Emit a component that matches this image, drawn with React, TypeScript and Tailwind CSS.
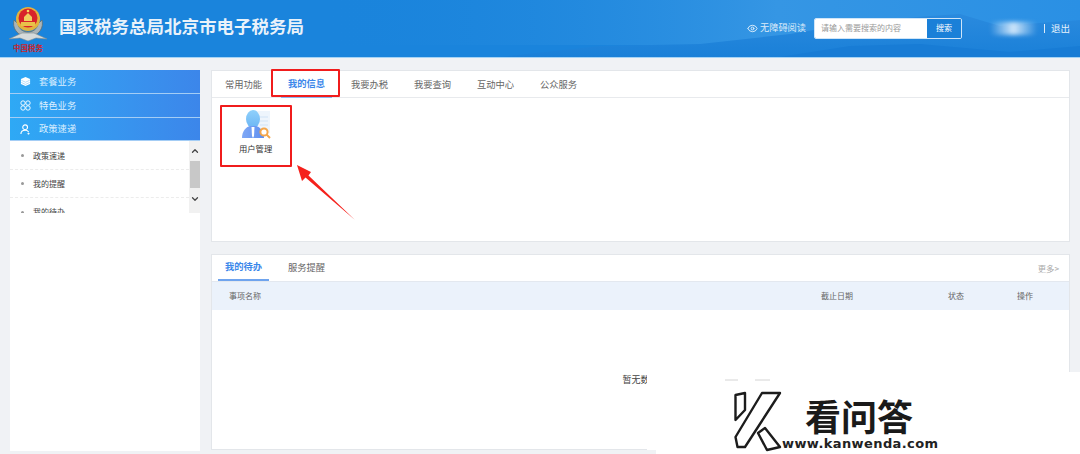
import { Eye, ChevronUp, ChevronDown } from "lucide-react";
import type { ReactNode } from "react";

const topTabs = ["常用功能", "我的信息", "我要办税", "我要查询", "互动中心", "公众服务"];

function CubeIcon() {
  return (
    <svg viewBox="0 0 12 12" className="w-[11px] h-[11px]">
      <path d="M6 1 L11 3.4 V8.6 L6 11 L1 8.6 V3.4Z" fill="#fff" />
      <path d="M1.4 4.6 L6 6.8 L10.6 4.6 M1.4 7 L6 9.2 L10.6 7" stroke="#8cc9f5" strokeWidth="0.7" fill="none" />
    </svg>
  );
}

function LoopsIcon() {
  return (
    <svg viewBox="0 0 12 12" className="w-[11px] h-[11px]" fill="none" stroke="#fff" strokeWidth="1">
      <circle cx="3.3" cy="3.3" r="2.4" />
      <circle cx="8.7" cy="3.3" r="2.4" />
      <circle cx="3.3" cy="8.7" r="2.4" />
      <circle cx="8.7" cy="8.7" r="2.4" />
    </svg>
  );
}

function PersonIcon() {
  return (
    <svg viewBox="0 0 12 12" className="w-[11px] h-[11px]" fill="none" stroke="#fff" strokeWidth="1.2">
      <circle cx="5.6" cy="3.6" r="2.6" />
      <path d="M1 11 C1 8 3 6.8 5.6 6.8 C7.4 6.8 8.6 7.4 9.4 8.6" />
      <path d="M9.2 9.4 V11.6 M8.1 10.5 H10.6" strokeWidth="0.9" />
    </svg>
  );
}

const sideItems: { label: string; icon: ReactNode; h: string }[] = [
  { label: "套餐业务", icon: <CubeIcon />, h: "h-[24px]" },
  { label: "特色业务", icon: <LoopsIcon />, h: "h-[24px]" },
  { label: "政策速递", icon: <PersonIcon />, h: "h-[23px]" },
];

function Emblem() {
  return (
    <div className="w-[38px] h-[52px] ml-[9px] flex flex-col items-center shrink-0">
      <svg viewBox="0 0 38 40" className="w-[38px] h-[40px]">
        <path d="M5 17 C3 25 8 31 14 33 L24 33 C30 31 35 25 33 17 L29 21 C28 26 24 29 19 29 C14 29 10 26 9 21Z" fill="#aab4b8" stroke="#5d6f73" strokeWidth="0.8" />
        <path d="M0 36 L13 30 L25 30 L38 36 L27 35 L19 38 L11 35Z" fill="#d5dadb" stroke="#7d8b8e" strokeWidth="0.6" />
        <circle cx="19" cy="16" r="12" fill="#e2b33d" />
        <circle cx="19" cy="15" r="9.5" fill="#d8232a" />
        <path d="M12 19 H26 V23 H12Z" fill="#e9c14a" />
        <path d="M15 14 L19 10 L23 14 V18 H15Z" fill="#f0cf5e" />
        <circle cx="19" cy="8" r="1.3" fill="#f5d85f" />
      </svg>
      <span className="text-[7.5px] leading-[9px] font-bold text-[#c9252b] font-['Noto_Sans_CJK_SC',serif] whitespace-nowrap">中国税务</span>
    </div>
  );
}

function HeaderScenery() {
  return (
    <svg viewBox="0 0 1080 57" preserveAspectRatio="none" className="absolute inset-0 w-full h-[57px]">
      <defs>
        <linearGradient id="sky" x1="0" y1="0" x2="1" y2="0">
          <stop offset="0.3" stopColor="#1a84dc" stopOpacity="0" />
          <stop offset="0.72" stopColor="#3596e4" />
          <stop offset="1" stopColor="#2a90e4" />
        </linearGradient>
        <linearGradient id="hill" x1="0" y1="0" x2="0" y2="1">
          <stop offset="0" stopColor="#2a8ade" />
          <stop offset="1" stopColor="#1a80d8" />
        </linearGradient>
      </defs>
      <rect width="1080" height="45" fill="url(#sky)" />
      <path d="M500 57 L600 46 L700 44 L790 34 L860 22 L930 16 L960 14 L1000 26 L1080 20 V57Z" fill="url(#hill)" />
      <path d="M780 57 L850 46 L920 44 L1010 52 L1080 46 V57Z" fill="#187cd5" />
    </svg>
  );
}

function UserManageIcon() {
  return (
    <svg viewBox="0 0 30 30" className="w-[30px] h-[30px]">
      <defs>
        <linearGradient id="head" x1="0" y1="0" x2="0" y2="1">
          <stop offset="0" stopColor="#8fd0fb" />
          <stop offset="1" stopColor="#6cb6f4" />
        </linearGradient>
        <linearGradient id="body" x1="0" y1="0" x2="1" y2="0">
          <stop offset="0" stopColor="#7fa8f5" />
          <stop offset="1" stopColor="#5f8ff0" />
        </linearGradient>
      </defs>
      <path d="M12 2 H29 V24 H18Z" fill="#eef5fc" />
      <path d="M19 8 H27 M19 12 H27 M19 16 H27" stroke="#cfe3f6" strokeWidth="1.2" />
      <ellipse cx="12" cy="10" rx="7" ry="9" fill="url(#head)" />
      <path d="M1 29 C1 22 5 18 9 17 L15 17 C19 18 23 22 23 29Z" fill="url(#body)" />
      <path d="M10.5 18 L13.5 18 L13 27 L12 29 L11 27Z" fill="#fff" />
      <circle cx="23" cy="23" r="3.6" fill="#fff" stroke="#f4a64a" strokeWidth="2" />
      <path d="M25.5 25.5 L29 29" stroke="#f4a64a" strokeWidth="2" />
    </svg>
  );
}

function SubRow({ label, border }: { label: string; border?: boolean }) {
  return (
    <div className={`h-[28px] flex items-center pl-[11px] gap-[9px] ${border ? "border-b border-dashed border-[#ececec]" : ""}`}>
      <span className="w-[3px] h-[3px] rounded-full bg-[#999]" />
      <span>{label}</span>
    </div>
  );
}

function Sidebar() {
  return (
    <aside className="w-[190px] ml-[10px] h-[381px] bg-white shrink-0">
      {sideItems.map(({ label, icon, h }) => (
        <div key={label} className={`${h} border-b border-[#a4cdf5] flex items-center pl-[10px] gap-[8px] bg-gradient-to-r from-[#2ea9f5] to-[#3c86ea] text-[#dcefff] text-[9.3px]`}>
          {icon}
          <span>{label}</span>
        </div>
      ))}
      <div className="h-[72px] flex overflow-hidden">
        <div className="flex-1 text-[8px] text-[#444] pt-[1px]">
          <SubRow label="政策速递" border />
          <SubRow label="我的提醒" border />
          <SubRow label="我的待办" />
        </div>
        <div className="w-[11px] bg-[#f1f1f1] flex flex-col items-center">
          <ChevronUp className="w-[10px] h-[20px] text-[#444]" strokeWidth={3} />
          <div className="w-[10px] h-[27px] bg-[#c8c8c8]" />
          <ChevronDown className="w-[10px] h-[22px] text-[#444]" strokeWidth={3} />
        </div>
      </div>
    </aside>
  );
}

export default function App() {
  return (
    <div className="relative w-[1080px] h-[454px] overflow-hidden bg-[#f0f2f5] font-['Noto_Sans_CJK_SC','Liberation_Sans',sans-serif]">
      {/* Header */}
      <header className="relative h-[58px] bg-[#1a84dc] border-b border-[#a5d3f5] flex items-center">
        <HeaderScenery />
        <div className="relative flex items-center w-full">
          <Emblem />
          <h1 className="ml-[12px] text-[17.5px] font-bold text-[#e9f2fa] whitespace-nowrap -mt-[4px]">国家税务总局北京市电子税务局</h1>
          <div className="ml-auto flex items-center -mt-[1px]">
            <Eye className="w-[11px] h-[11px] text-[#e6f2fc] mr-[2px]" />
            <span className="text-[9.2px] text-[#dcebf9]">无障碍阅读</span>
            <div className="ml-[8px] w-[148px] h-[21px] flex rounded-[2px] border border-[#cfe5f8] overflow-hidden">
              <div className="flex-1 bg-white pl-[6px] flex items-center text-[8px] text-[#999]">请输入需要搜索的内容</div>
              <div className="w-[34px] bg-[#1a80d8] flex items-center justify-center text-[8px] text-white">搜索</div>
            </div>
            <div className="ml-[28px] w-[47px] h-[13px] rounded-[3px] bg-gradient-to-r from-[#ffffff00] via-[#cfe6fa] to-[#ffffff00] blur-[2px]" />
            <span className="ml-[7px] w-px h-[9px] bg-[#dcebf9]" />
            <span className="ml-[6px] mr-[10px] text-[9.5px] text-[#e6f2fc]">退出</span>
          </div>
        </div>
      </header>

      {/* Body */}
      <div className="flex items-start pt-[12px]">
        <Sidebar />
        <main className="ml-[11px] w-[859px] flex flex-col gap-[12px]">
          <section className="h-[172px] bg-white border border-[#e3e6ea]">
            <nav className="h-[27px] border-b border-[#e8eaed] flex pl-[6px]">
              {topTabs.map((t, i) => (
                <div key={t} className={`w-[51px] mr-[12px] h-[27px] flex items-center justify-center text-[9.3px] ${i === 1 ? "border-b-2 border-[#8ab6f0] text-[#3b87ea] font-bold" : "text-[#666]"}`}>
                  {t}
                </div>
              ))}
            </nav>
            <div className="pl-[27px] pt-[11px] w-fit flex flex-col items-center">
              <UserManageIcon />
              <span className="mt-[3px] text-[8.3px] text-[#333]">用户管理</span>
            </div>
          </section>

          <section className="h-[196px] bg-white border border-[#e3e6ea] flex flex-col">
            <div className="h-[26px] flex items-center pl-[6px] shrink-0">
              <div className="w-[51px] h-[26px] flex items-center justify-center border-b-2 border-[#6fa4ee] text-[9.3px] font-bold text-[#3b87ea]">我的待办</div>
              <div className="ml-[12px] w-[51px] text-center text-[9.3px] text-[#666]">服务提醒</div>
              <span className="ml-auto mr-[10px] text-[8.3px] text-[#aaa]">更多&gt;</span>
            </div>
            <div className="h-[29px] bg-[#ebf2fb] border-t border-[#e3e8ef] flex items-center pl-[17px] text-[8px] text-[#666] shrink-0">
              <span className="w-[592px]">事项名称</span>
              <span className="w-[127px]">截止日期</span>
              <span className="w-[69px]">状态</span>
              <span>操作</span>
            </div>
            <div className="flex-1 flex items-center justify-center text-[9px] text-[#444]">暂无数据</div>
          </section>
        </main>
      </div>

      {/* Annotations */}
      <div className="absolute left-[271px] top-[69px] w-[69px] h-[28px] border-2 border-[#f01c1c] rounded-[1px]" />
      <div className="absolute left-[220px] top-[105px] w-[72px] h-[62px] border-2 border-[#f01c1c] rounded-[1px]" />
      <svg className="absolute left-[290px] top-[160px] w-[70px] h-[65px]" viewBox="290 160 70 65">
        <polygon points="297,165 311,172 308.5,175.5 355,220 305.5,177.5 302,181" fill="#f5211c" />
      </svg>

      {/* Watermark */}
      <div className="absolute left-[647px] top-[372px] w-[9px] h-[78px] bg-white" />
      <div className="absolute left-[656px] top-[372px] right-0 bottom-0 bg-white" />
      <svg className="absolute left-[720px] top-[376px] w-[120px] h-[78px]" viewBox="720 376 120 78" fill="#fff" stroke="#1c1c1c" strokeWidth="2.4" strokeLinejoin="round">
        <path d="M725 380 H738 M755 380 H770" stroke="#d4d4d4" strokeWidth="1" fill="none" />
        <path d="M735.5 395 L745 393 V410 L735.5 420Z" />
        <path d="M762 393 H780 L745 447 H737.5 L735.5 437Z" />
        <path d="M758 433 L765 428 L780 447 L767 450Z" />
      </svg>
      <div className="absolute left-[805px] top-[397px] text-[36px] leading-[36px] font-bold text-[#1a1a1a] whitespace-nowrap">看问答</div>
      <div className="absolute left-[782px] top-[436px] text-[13px] leading-[15px] font-bold text-[#222] tracking-[0.4px] whitespace-nowrap font-['DejaVu_Sans',sans-serif]">www.kanwenda.com</div>
    </div>
  );
}
